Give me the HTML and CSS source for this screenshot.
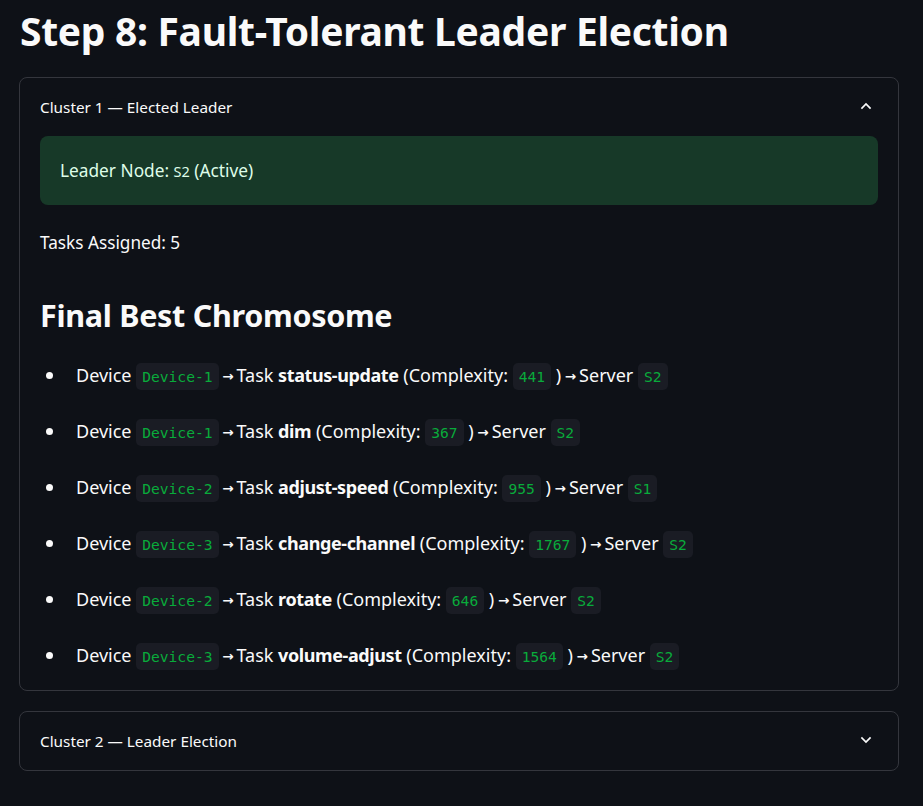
FILE: index.html
```html
<!DOCTYPE html>
<html>
<head>
<meta charset="utf-8">
<link rel="stylesheet" href="styles.css">
</head>
<body>
<main class="page">
  <h1 class="title">Step 8: Fault-Tolerant Leader Election</h1>

  <section class="expander">
    <div class="exp-head">
      <span>Cluster 1 — Elected Leader</span>
      <svg class="chev" width="16" height="16" viewBox="0 0 24 24"><path d="M6 15l6-6 6 6" fill="none" stroke="#fafafa" stroke-width="2.6" stroke-linecap="square"/></svg>
    </div>
    <div class="exp-body">
      <div class="success">Leader Node: <span class="small">S2</span> (Active)</div>
      <p class="tasks">Tasks Assigned: 5</p>
      <h3 class="sub">Final Best Chromosome</h3>
      <ul class="list">
        <li>Device <code>Device-1</code> <span class="arr">→</span>Task <b>status-update</b> (Complexity: <code>441</code> ) <span class="arr">→</span>Server <code>S2</code></li>
        <li>Device <code>Device-1</code> <span class="arr">→</span>Task <b>dim</b> (Complexity: <code>367</code> ) <span class="arr">→</span>Server <code>S2</code></li>
        <li>Device <code>Device-2</code> <span class="arr">→</span>Task <b>adjust-speed</b> (Complexity: <code>955</code> ) <span class="arr">→</span>Server <code>S1</code></li>
        <li>Device <code>Device-3</code> <span class="arr">→</span>Task <b>change-channel</b> (Complexity: <code>1767</code> ) <span class="arr">→</span>Server <code>S2</code></li>
        <li>Device <code>Device-2</code> <span class="arr">→</span>Task <b>rotate</b> (Complexity: <code>646</code> ) <span class="arr">→</span>Server <code>S2</code></li>
        <li>Device <code>Device-3</code> <span class="arr">→</span>Task <b>volume-adjust</b> (Complexity: <code>1564</code> ) <span class="arr">→</span>Server <code>S2</code></li>
      </ul>
    </div>
  </section>

  <section class="expander closed">
    <div class="exp-head">
      <span>Cluster 2 — Leader Election</span>
      <svg class="chev" width="16" height="16" viewBox="0 0 24 24"><path d="M6 9l6 6 6-6" fill="none" stroke="#fafafa" stroke-width="2.6" stroke-linecap="square"/></svg>
    </div>
  </section>
</main>
</body>
</html>
```
FILE: styles.css
```css
html, body {
  margin: 0;
  padding: 0;
  background: #0e1117;
  color: #fafafa;
  font-family: "Noto Sans", "Open Sans", sans-serif;
}
.page {
  padding: 0 24px 0 19px;
  display: flex;
  flex-direction: column;
}
.title {
  margin: 0;
  padding: 5px 0 0 1px;
  font-size: 39px;
  font-weight: 700;
  line-height: 52px;
  letter-spacing: -0.3px;
  height: 72px;
}
.expander {
  border: 1px solid #34363d;
  border-radius: 8px;
  margin-bottom: 20px;
}
.exp-head {
  display: flex;
  align-items: center;
  justify-content: space-between;
  height: 58px;
  padding: 0 24px 0 20px;
  font-size: 15.3px;
}
.chev { margin-top: -2px; }
.exp-body {
  padding: 0 20px 17px 20px;
}
.success {
  background: #173928;
  color: #dffde9;
  border-radius: 8px;
  height: 69px;
  display: flex;
  align-items: center;
  padding: 0 20px;
  font-size: 17.3px;
  white-space: pre;
}
.success .small { font-size: 14.5px; }
.tasks {
  margin: 0;
  padding-top: 26px;
  font-size: 17.2px;
  line-height: 24px;
}
.sub {
  margin: 0;
  padding-top: 40px;
  font-size: 30.5px;
  font-weight: 700;
  line-height: 40px;
  letter-spacing: -0.3px;
}
.list {
  margin: 0;
  padding: 22px 0 0 36px;
  list-style: none;
}
.list li {
  position: relative;
  font-size: 18px;
  line-height: 36px;
  height: 36px;
  margin-bottom: 20px;
  white-space: nowrap;
}
.list li:last-child { margin-bottom: 0; }
.list li::before {
  content: "";
  position: absolute;
  left: -30px;
  top: 15px;
  width: 7px;
  height: 7px;
  border-radius: 50%;
  background: #fafafa;
}
.list b {
  font-weight: 700;
  letter-spacing: -0.4px;
}
.arr {
  font-family: "DejaVu Sans", sans-serif;
  font-weight: 700;
  font-size: 13.5px;
  line-height: 1;
  margin-left: -1px;
  margin-right: 3px;
  position: relative;
  top: -1px;
}
code {
  font-family: "DejaVu Sans Mono", "Liberation Mono", monospace;
  font-size: 14.6px;
  line-height: 1;
  color: #09ab3b;
  background: #1a1c24;
  border-radius: 5px;
  padding: 5px 6px;
}
```
